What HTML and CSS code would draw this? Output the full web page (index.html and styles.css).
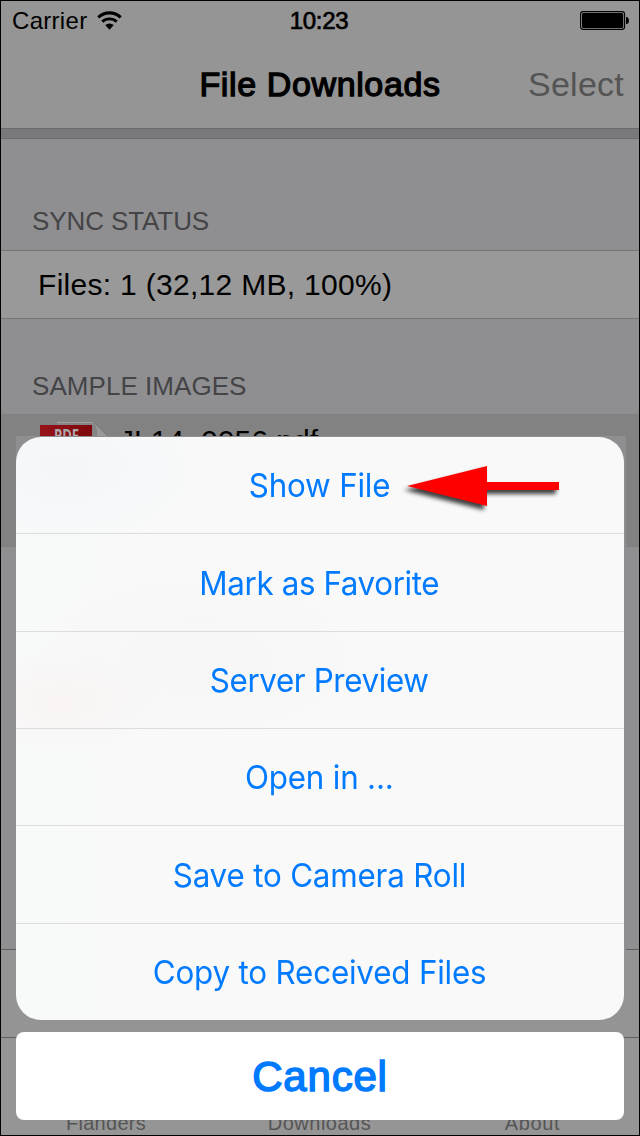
FILE: index.html
```html
<!DOCTYPE html>
<html lang="en">
<head>
<meta charset="utf-8">
<title>File Downloads</title>
<link rel="stylesheet" href="styles.css">
</head>
<body>
<div class="screen">
  <header class="header">
    <div class="status">
      <div class="carrier"><span class="carrier-name">Carrier</span>
        <svg class="wifi" width="26" height="20" viewBox="0 0 26 20">
          <g fill="none" stroke="#000">
            <path d="M1.300 6.300A16.500 16.500 0 0 1 23.700 6.300" stroke-width="3.100"/>
            <path d="M5.300 10.700A10.600 10.600 0 0 1 19.700 10.700" stroke-width="2.900"/>
          </g>
          <path d="M8.200 14.100Q12.500 11 16.800 14.100L12.500 18.800Z"/>
        </svg>
      </div>
      <span class="clock">10:23</span>
      <svg class="battery" width="50" height="20" viewBox="0 0 50 20">
        <rect x=".6" y=".6" width="44" height="17.8" rx="2.6" fill="none" stroke="#000" stroke-width="1.1"/>
        <rect x="2" y="2" width="41.2" height="15" rx="1.5"/>
        <path d="M46 6h1q2 .5 2 3.500t-2 3.500h-1z"/>
      </svg>
    </div>
    <div class="navbar"><h1 class="title">File Downloads</h1><span class="select">Select</span></div>
  </header>
  <div class="strip"></div>
  <main class="list">
    <div class="section section-sync"><span class="sync-label">SYNC STATUS</span></div>
    <div class="summary"><span class="summary-text">Files: 1 (32,12 MB, 100%)</span></div>
    <div class="section section-images"><span class="images-label">SAMPLE IMAGES</span></div>
    <div class="file">
      <svg class="pdf" width="70" height="70" viewBox="0 0 70 70">
        <defs>
          <linearGradient id="banner" x1="0" y1="0" x2="1" y2="0"><stop stop-color="#97131a"/><stop offset="1" stop-color="#7d080d"/></linearGradient>
        </defs>
        <path d="M17 1h37l13 13v56H17z" fill="#858585"/>
        <path d="M17 1.500h36" stroke="#a2a2a2"/>
        <path d="M53 1q5 5 4 14h10z" fill="#999"/>
        <path d="M54 1l13 13" stroke="#777"/>
        <rect y="4" width="52" height="30" fill="url(#banner)"/>
        <text class="pdf-label" x="14" y="20.500" textLength="25" lengthAdjust="spacingAndGlyphs">PDF</text>
      </svg>
      <span class="file-name">JL14_0056.pdf</span>
    </div>
  </main>
  <div class="toolbar"></div>
  <nav class="tabs"><span class="tab">Flanders</span><span class="tab tab-two">Downloads</span><span class="tab tab-three">About</span></nav>

  <div class="overlay">
    <div class="backing">
      <div class="sheet">
        <button class="action"><span class="action-label">Show File</span></button>
        <button class="action"><span class="action-label tight">Mark as Favorite</span></button>
        <button class="action"><span class="action-label tight">Server Preview</span></button>
        <button class="action"><span class="action-label">Open in ...</span></button>
        <button class="action"><span class="action-label">Save to Camera Roll</span></button>
        <button class="action"><span class="action-label">Copy to Received Files</span></button>
      </div>
    </div>
    <button class="cancel"><span class="cancel-label">Cancel</span></button>
  </div>
  <svg class="arrow" width="170" height="60" viewBox="0 0 170 60">
    <path d="M7 26L87 6v16h72v8H87v16z" fill="red"/>
  </svg>
</div>
</body>
</html>
```
FILE: styles.css
```css
* { box-sizing: border-box; }
body { margin: 0; background: #000; }
.screen {
  position: relative;
  display: flex;
  flex-direction: column;
  width: 640px;
  height: 1136px;
  overflow: hidden;
  border: 1px solid #000;
  background: #8f8f92;
  color: #000;
  font-family: "Liberation Sans", Arial, sans-serif;
  white-space: nowrap;
}
.header { height: 128px; background: #959595; border-bottom: 1px solid #69696b; }
.status {
  display: grid;
  grid-template-columns: 1fr auto 1fr;
  align-items: center;
  height: 40px;
  padding: 0 9px 0 11px;
  font-size: 24px;
}
.carrier { display: flex; align-items: center; gap: 10px; }
.carrier-name { letter-spacing: .3px; }
.clock { margin-right: 4px; -webkit-text-stroke: .7px #000; letter-spacing: -.3px; }
.battery { justify-self: end; }
.navbar { display: grid; grid-template-columns: 1fr auto 1fr; align-items: center; height: 87px; padding: 0 15px; }
.title { grid-column: 2; margin: 0; font-size: 34px; font-weight: 400; -webkit-text-stroke: 1.3px #000; letter-spacing: .62px; }
.select { justify-self: end; font-size: 34px; letter-spacing: .25px; color: #545454; }
.strip { height: 10px; background: #79797b; border-bottom: 1px solid #6d6d70; }
.list { display: flex; flex-direction: column; height: 810px; }
.section { display: flex; align-items: flex-end; padding: 0 31px; font-size: 26px; line-height: 30px; color: #444446; }
.section-sync { height: 111px; padding-bottom: 14px; letter-spacing: -.1px; }
.summary { display: flex; align-items: center; height: 69px; padding: 0 37px; background: #999; border: solid #757577; border-width: 1px 0; font-size: 30px; }
.summary-text { letter-spacing: .3px; }
.section-images { height: 95px; padding-bottom: 13px; letter-spacing: .05px; }
.file { display: flex; align-items: flex-start; gap: 9px; height: 133px; padding: 7px 39px; background: #828282; }
.pdf-label { font: bold 17px "Open Sans", sans-serif; fill: #aaa; }
.file-name { padding-top: 2px; font-size: 30px; line-height: 36px; letter-spacing: .05px; }
.toolbar { height: 88px; background: #949494; border-top: 1px solid #616163; }
.tabs { display: grid; grid-template-columns: 210px 1fr 211px; align-items: end; flex: 1; background: #959595; border-top: 1px solid #616163; text-align: center; font-size: 20px; line-height: 23px; letter-spacing: .3px; color: #555; }
.tab-two { letter-spacing: .5px; }
.tab-three { padding-right: 2px; letter-spacing: .6px; }
.overlay { position: absolute; top: 435px; left: 15px; width: 610px; display: flex; flex-direction: column; gap: 12px; }
.backing { height: 584px; padding: 1px 2px 0 0; background: linear-gradient(#8f8f92 513px, #949494 0); }
.sheet {
  height: 583px;
  overflow: hidden;
  border-radius: 25px;
  background:
    radial-gradient(ellipse 140px 80px at 50px 30px, #f3f6f9, transparent),
    radial-gradient(ellipse 100px 50px at 45px 265px, #f9f3f3, transparent),
    radial-gradient(ellipse 180px 90px at 180px 220px, #f6f6f6, transparent),
    linear-gradient(90deg, #f8f9f9, #f9f9f9 40%);
}
.action { display: flex; align-items: center; justify-content: center; width: 100%; height: 97.36px; padding: 0 1px 0 0; border: 0; border-bottom: 1px solid #dcdcde; background: none; color: #007aff; font: 33px Inter, sans-serif; white-space: pre; }
.action-label { display: inline-block; transform: scaleX(.95); letter-spacing: -.2px; }
.tight { letter-spacing: -.4px; }
.action:last-child { height: 96.2px; border: 0; }
.cancel { display: flex; align-items: center; justify-content: center; width: 608px; height: 88px; padding: 2px 0 0; border: 0; border-radius: 8px; background: #fff; color: #007aff; font: 42px "Liberation Sans", Arial, sans-serif; }
.cancel-label { -webkit-text-stroke: 1.5px #007aff; letter-spacing: .8px; }
.arrow { position: absolute; top: 459px; left: 399px; filter: drop-shadow(-3px 4px 2px rgba(0, 0, 0, .75)); }
```
